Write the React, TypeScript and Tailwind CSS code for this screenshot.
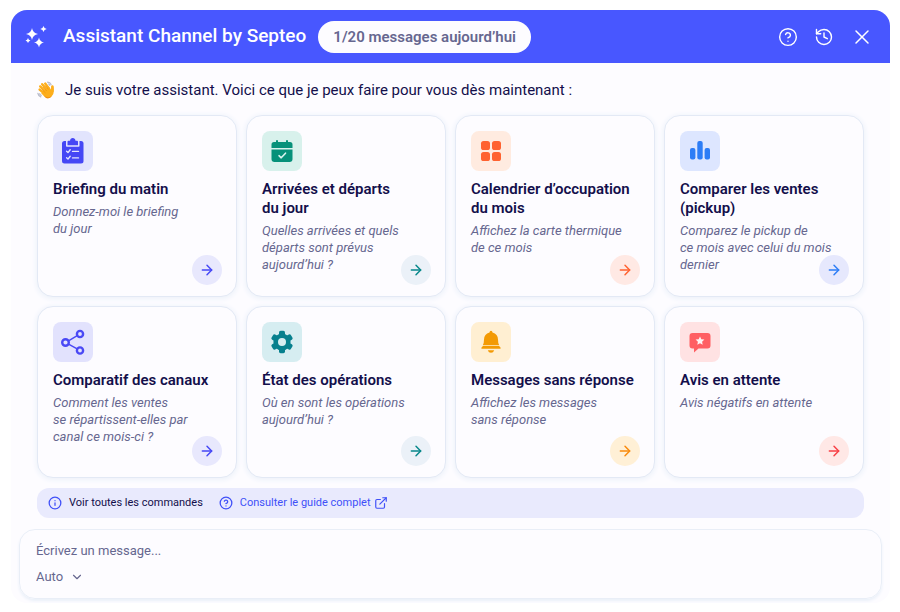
import { useState } from "react";
import type { ReactNode } from "react";
import {
  ArrowRight,
  ChevronDown,
  CircleHelp,
  ExternalLink,
  History,
  Info,
  X,
} from "lucide-react";

interface Shortcut {
  title: string;
  prompt: string;
  icon: ReactNode;
  tile: string;
  arrow: string;
}

const SparklesIcon = () => (
  <svg viewBox="0 0 24 24" className="h-6 w-6" fill="currentColor" aria-hidden="true">
    <path d="M8 3 Q8.8 8.2 14 9 Q8.8 9.8 8 15 Q7.2 9.8 2 9 Q7.2 8.2 8 3Z" />
    <path d="M19.5 1 Q20 3.5 22.7 4 Q20 4.5 19.5 7 Q19 4.5 16.3 4 Q19 3.5 19.5 1Z" />
    <path d="M4 13 Q4.5 15 6.5 15.5 Q4.5 16 4 18 Q3.5 16 1.5 15.5 Q3.5 15 4 13Z" />
    <path d="M15 12.5 Q15.8 16.7 20 17.5 Q15.8 18.3 15 22.5 Q14.2 18.3 10 17.5 Q14.2 16.7 15 12.5Z" />
  </svg>
);

const WaveIcon = () => (
  <svg viewBox="0 0 18 18" className="h-[18px] w-[18px]" aria-hidden="true">
    <g fill="none" stroke="#b9bccb" strokeWidth="1.3" strokeLinecap="round">
      <path d="M10.6 1.2 Q13 1.4 14 3.6" />
      <path d="M11.6 3 Q12.4 3.3 12.8 4.2" />
      <path d="M0.9 12.4 Q1.4 15 3.8 15.8" />
      <path d="M2.6 12.8 Q3 14 4.2 14.4" />
    </g>
    <g stroke="#fdae1c" strokeLinecap="round" strokeWidth="2.4">
      <path d="M5.2 3.2 L10 8.6" />
      <path d="M3.2 5.4 L8.4 10.6" />
      <path d="M2.6 8.6 L7.4 12.6" />
      <path d="M8.2 2.6 L12 7.4" />
      <path d="M15.4 5.4 L15.4 10" />
    </g>
    <path
      d="M11.4 5.6 L14 8.4 Q14.2 5 15.6 4.8 Q17 5.2 16.8 9.6 Q17 13.4 14.6 15.4 Q10.8 18.4 7.4 15.4 L4.2 12.2 Z"
      fill="#fdae1c"
    />
    <path
      d="M6.2 6.2 L9.4 9.6 M5 8.6 L8.2 11.6 M8.6 5 L11.4 8.2"
      stroke="#e98a0c"
      strokeWidth="0.6"
      strokeLinecap="round"
    />
    <path d="M6.6 14.6 Q11 18 14.8 14.8 Q13.6 17.4 10.8 17.4 Q8.4 17.2 6.6 14.6Z" fill="#f08f12" />
  </svg>
);

const ClipboardIcon = () => (
  <svg viewBox="0 0 28 28" className="h-7 w-7" aria-hidden="true">
    <rect x="3" y="4" width="21.5" height="22.5" rx="2.5" fill="#4547f5" />
    <path d="M7 3 H20.5 V9 Q20.5 9.8 19.7 9.8 H7.8 Q7 9.8 7 9Z" fill="#e3e4fd" />
    <path
      d="M8.5 8.3 V4.8 Q8.5 3.8 9.5 3.8 H11 Q11.4 1 13.75 1 Q16.1 1 16.5 3.8 H18 Q19 3.8 19 4.8 V8.3Z"
      fill="#4547f5"
    />
    <path
      d="M7.6 14.3 L9 15.6 L11.2 12.8 M13.5 14.4 H19.5 M7.6 20.8 L9 22.1 L11.2 19.3 M13.5 20.9 H19.5"
      fill="none"
      stroke="#e3e4fd"
      strokeWidth="1.4"
      strokeLinecap="round"
      strokeLinejoin="round"
    />
  </svg>
);

const CalendarIcon = () => (
  <svg viewBox="0 0 28 28" className="h-7 w-7" aria-hidden="true">
    <path
      d="M3.5 11 V7.5 Q3.5 5 6 5 H8 V4 Q8 3 9 3 Q10 3 10 4 V5 H18 V4 Q18 3 19 3 Q20 3 20 4 V5 H22 Q24.5 5 24.5 7.5 V11Z"
      fill="#07917a"
    />
    <path d="M3.5 12.5 H24.5 V22 Q24.5 25 21.5 25 H6.5 Q3.5 25 3.5 22Z" fill="#07917a" />
    <path
      d="M11 18.7 L13.2 20.8 L17.5 16.2"
      fill="none"
      stroke="#d9f3ee"
      strokeWidth="1.6"
      strokeLinecap="round"
      strokeLinejoin="round"
    />
  </svg>
);

const GridIcon = () => (
  <svg viewBox="0 0 28 28" className="h-7 w-7" fill="#ff6230" aria-hidden="true">
    <rect x="4" y="4" width="9" height="9" rx="2.6" />
    <rect x="15" y="4" width="9" height="9" rx="2.6" />
    <rect x="4" y="15" width="9" height="9" rx="2.6" />
    <rect x="15" y="15" width="9" height="9" rx="2.6" />
  </svg>
);

const BarsIcon = () => (
  <svg viewBox="0 0 28 28" className="h-7 w-7" fill="#2d7df6" aria-hidden="true">
    <rect x="4" y="11" width="5.4" height="11.5" rx="2" />
    <rect x="11.3" y="4" width="5.4" height="18.5" rx="2" />
    <rect x="18.6" y="11" width="5.4" height="11.5" rx="2" />
  </svg>
);

const ShareIcon = () => (
  <svg
    viewBox="0 0 28 28"
    className="h-7 w-7"
    fill="none"
    stroke="#4a49f5"
    strokeWidth="2.4"
    aria-hidden="true"
  >
    <circle cx="6.5" cy="14.5" r="3.3" />
    <circle cx="21" cy="6" r="3.1" />
    <circle cx="21" cy="22.5" r="3.1" />
    <path d="M9.5 12.8 L18.2 7.7 M9.5 16.2 L18.2 20.9" strokeWidth="1.5" />
  </svg>
);

const GearIcon = () => (
  <svg viewBox="0 0 28 28" className="h-7 w-7" aria-hidden="true">
    <g fill="#07808e">
      <circle cx="14" cy="14" r="8.6" />
      <rect x="11" y="2.8" width="6" height="22.4" rx="1.6" />
      <rect x="11" y="2.8" width="6" height="22.4" rx="1.6" transform="rotate(60 14 14)" />
      <rect x="11" y="2.8" width="6" height="22.4" rx="1.6" transform="rotate(120 14 14)" />
    </g>
    <circle cx="14" cy="14" r="4" fill="#d6edf1" />
  </svg>
);

const BellIcon = () => (
  <svg viewBox="0 0 28 28" className="h-7 w-7" fill="#f39a04" aria-hidden="true">
    <path d="M14 2.8 Q15.4 2.8 15.5 4.4 Q20.8 5.6 21 11.5 Q21 15.6 22.2 17.3 H5.8 Q7 15.6 7 11.5 Q7.2 5.6 12.5 4.4 Q12.6 2.8 14 2.8Z" />
    <path d="M6 18 H22 Q24 19.2 23.6 20.8 H4.4 Q4 19.2 6 18Z" />
    <path d="M10.8 22.2 H17.2 Q16.4 24.8 14 24.8 Q11.6 24.8 10.8 22.2Z" />
  </svg>
);

const ReviewIcon = () => (
  <svg viewBox="0 0 28 28" className="h-7 w-7" aria-hidden="true">
    <path
      d="M6.5 5 H21.5 Q24.5 5 24.5 8 V17.5 Q24.5 20.5 21.5 20.5 H12.5 L8 24.6 V20.5 H6.5 Q3.5 20.5 3.5 17.5 V8 Q3.5 5 6.5 5Z"
      fill="#ff5f63"
    />
    <path
      d="M14 8.4 L15.3 11.3 L18.4 11.6 L16.1 13.7 L16.7 16.8 L14 15.2 L11.3 16.8 L11.9 13.7 L9.6 11.6 L12.7 11.3Z"
      fill="#fff3f3"
    />
  </svg>
);

const shortcuts: Shortcut[] = [
  {
    title: "Briefing du matin",
    prompt: "Donnez-moi le briefing\ndu jour",
    icon: <ClipboardIcon />,
    tile: "bg-[#e2e4fd]",
    arrow: "bg-[#e8e8fd] text-[#4547f5]",
  },
  {
    title: "Arrivées et départs\ndu jour",
    prompt: "Quelles arrivées et quels\ndéparts sont prévus\naujourd’hui ?",
    icon: <CalendarIcon />,
    tile: "bg-[#d8f1ec]",
    arrow: "bg-[#ebf1f8] text-[#07878a]",
  },
  {
    title: "Calendrier d’occupation\ndu mois",
    prompt: "Affichez la carte thermique\nde ce mois",
    icon: <GridIcon />,
    tile: "bg-[#ffebe0]",
    arrow: "bg-[#ffe9e4] text-[#ff6230]",
  },
  {
    title: "Comparer les ventes\n(pickup)",
    prompt: "Comparez le pickup de\nce mois avec celui du mois\ndernier",
    icon: <BarsIcon />,
    tile: "bg-[#dde6ff]",
    arrow: "bg-[#e6e8fd] text-[#2d7df6]",
  },
  {
    title: "Comparatif des canaux",
    prompt: "Comment les ventes\nse répartissent-elles par\ncanal ce mois-ci ?",
    icon: <ShareIcon />,
    tile: "bg-[#e2e2fd]",
    arrow: "bg-[#e8e8fd] text-[#4547f5]",
  },
  {
    title: "État des opérations",
    prompt: "Où en sont les opérations\naujourd’hui ?",
    icon: <GearIcon />,
    tile: "bg-[#d6edf1]",
    arrow: "bg-[#ebf1f8] text-[#07878a]",
  },
  {
    title: "Messages sans réponse",
    prompt: "Affichez les messages\nsans réponse",
    icon: <BellIcon />,
    tile: "bg-[#ffefd2]",
    arrow: "bg-[#fff0d6] text-[#f98a0c]",
  },
  {
    title: "Avis en attente",
    prompt: "Avis négatifs en attente",
    icon: <ReviewIcon />,
    tile: "bg-[#ffe2e3]",
    arrow: "bg-[#ffe8e6] text-[#f83f45]",
  },
];

interface ShortcutCardProps {
  shortcut: Shortcut;
  onSelect: (prompt: string) => void;
}

const ShortcutCard = ({ shortcut, onSelect }: ShortcutCardProps) => (
  <article className="relative min-h-[172px] rounded-2xl border border-[#e3e9f5] bg-[#fdfcff] px-[15px] pt-[15px] pb-[23px] shadow-[0_1px_5px_1px_#edf2fa]">
    <div className={`flex h-10 w-10 items-center justify-center rounded-lg ${shortcut.tile}`}>
      {shortcut.icon}
    </div>
    <h2 className="mt-[9px] text-[15px] leading-[19px] font-semibold whitespace-pre-line text-[#130f4b]">
      {shortcut.title}
    </h2>
    <p className="mt-1 text-[13px] leading-[17px] whitespace-pre-line text-[#66678f] italic">
      {shortcut.prompt}
    </p>
    <button
      type="button"
      aria-label={shortcut.title}
      onClick={() => onSelect(shortcut.prompt.replace(/\n/g, " "))}
      className={`absolute right-3.5 bottom-[11px] flex h-[30px] w-[30px] items-center justify-center rounded-full ${shortcut.arrow}`}
    >
      <ArrowRight className="h-4 w-4" strokeWidth={2.2} />
    </button>
  </article>
);

export default function App() {
  const [message, setMessage] = useState<string>("");
  const [mode, setMode] = useState<string>("auto");

  return (
    <div className="bg-white pt-2.5 pr-2.5 pl-[11px] font-['Roboto','Liberation_Sans',sans-serif]">
      <div className="overflow-hidden rounded-2xl bg-[#fdfcff] pb-1">
        {/* Header */}
        <header className="flex h-[53px] items-center bg-[#4857ff] px-[13px] text-white">
          <SparklesIcon />
          <h1 className="ml-[15px] text-[19px] font-medium">Assistant Channel by Septeo</h1>
          <span className="ml-3 rounded-full bg-[#fdfcff] px-[15px] py-1.5 text-[15px] leading-5 font-semibold text-[#66678f]">
            1/20 messages aujourd’hui
          </span>
          <div className="ml-auto flex items-center gap-4 pr-[3px]">
            <button type="button" aria-label="Aide">
              <CircleHelp className="h-5 w-5" strokeWidth={1.7} />
            </button>
            <button type="button" aria-label="Historique">
              <History className="h-5 w-5" strokeWidth={1.7} />
            </button>
            <button type="button" aria-label="Fermer">
              <X className="h-6 w-6" strokeWidth={1.5} />
            </button>
          </div>
        </header>

        <main className="px-[26px] pt-[15px]">
          <div className="mb-[13px] flex items-center gap-2.5 text-[#130f4b]">
            <WaveIcon />
            <p className="text-[15px] leading-6">
              Je suis votre assistant. Voici ce que je peux faire pour vous dès maintenant :
            </p>
          </div>

          <section className="grid grid-cols-4 gap-[9px]">
            {shortcuts.map((shortcut) => (
              <ShortcutCard key={shortcut.title} shortcut={shortcut} onSelect={setMessage} />
            ))}
          </section>

          {/* Help links */}
          <div className="mt-2.5 flex h-[30px] items-center gap-4 rounded-xl bg-[#e9eafd] px-[11px] text-[11px]">
            <button type="button" className="flex items-center gap-[7px] text-[#130f4b]">
              <Info className="h-3.5 w-3.5 text-[#4050f8]" strokeWidth={2.2} />
              Voir toutes les commandes
            </button>
            <a href="#guide" className="flex items-center gap-[7px] text-[#4050f8]">
              <CircleHelp className="h-3.5 w-3.5" strokeWidth={2.2} />
              <span className="flex items-center gap-[3px]">
                Consulter le guide complet
                <ExternalLink className="h-3.5 w-3.5" />
              </span>
            </a>
          </div>
        </main>

        {/* Composer */}
        <form
          onSubmit={(e) => e.preventDefault()}
          className="mx-2 mt-[11px] rounded-2xl border border-[#e9eef7] px-4 pt-[11px] pb-[11px] text-[13px] leading-5 text-[#66678f] shadow-[0_2px_3px_#eaf0f9]"
        >
          <input
            type="text"
            aria-label="Message"
            placeholder="Écrivez un message..."
            value={message}
            onChange={(e) => setMessage(e.target.value)}
            className="block w-full placeholder:text-[#66678f] focus:outline-none"
          />
          <div className="relative mt-1.5 w-12">
            <select
              aria-label="Mode"
              value={mode}
              onChange={(e) => setMode(e.target.value)}
              className="block w-full appearance-none focus:outline-none"
            >
              <option value="auto">Auto</option>
            </select>
            <ChevronDown className="pointer-events-none absolute top-[3px] right-0 h-3.5 w-3.5" />
          </div>
        </form>
      </div>
    </div>
  );
}
